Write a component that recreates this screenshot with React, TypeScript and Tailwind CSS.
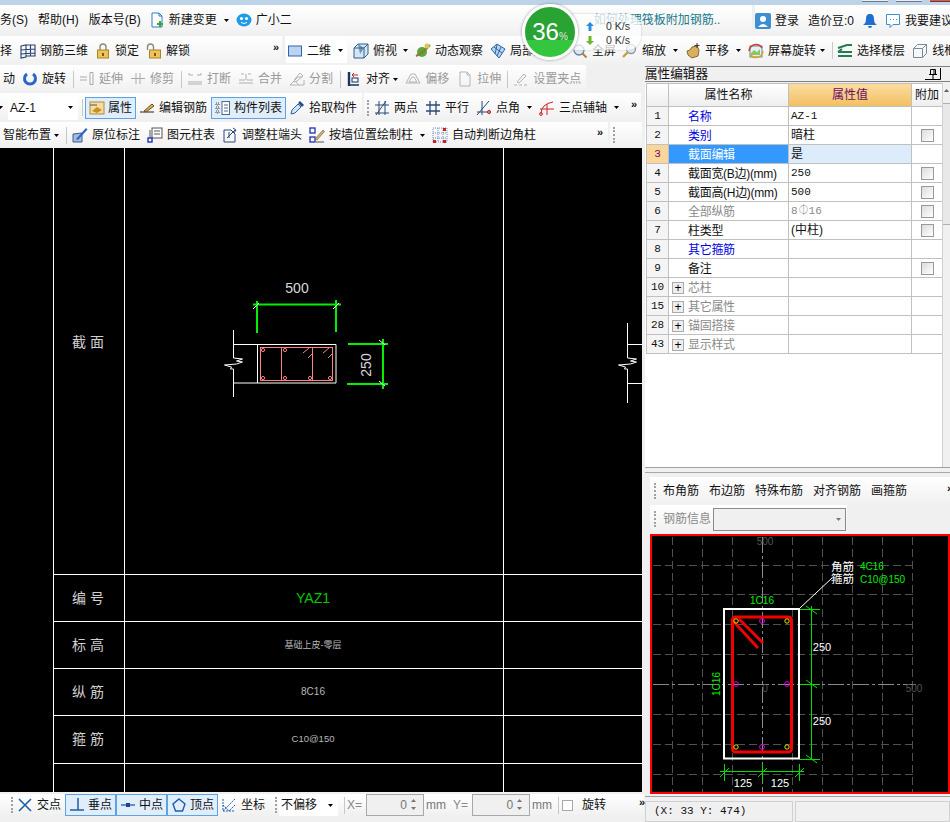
import type { ReactNode } from "react";

const Svg = ({ children, w = 16 }: { children: ReactNode; w?: number }) => (
  <svg width={w} height={16} viewBox="0 0 16 16" className="shrink-0" fill="none">
    {children}
  </svg>
);

const icons: Record<string, ReactNode> = {
  doc: (
    <>
      <path d="M3 1h7l3 3v11H3z" fill="#fff" stroke="#2c7fc9" />
      <path d="M10 1v3h3" stroke="#2c7fc9" />
      <path d="M10 9h2v2h2v2h-2v2h-2v-2H8v-2h2z" fill="#3aa63a" />
    </>
  ),
  mascot: (
    <>
      <ellipse cx="8" cy="8" rx="7.5" ry="6.5" fill="#1f9ae8" />
      <circle cx="5.5" cy="6.5" r="1.6" fill="#fff" />
      <circle cx="10.5" cy="6.5" r="1.6" fill="#fff" />
      <path d="M5 10.5q3 2 6 0" stroke="#fff" />
    </>
  ),
  grid3d: (
    <path d="M1 3l5-1v12l-5 1zM6 2h9v11H6M1 7l14-1M1 11l14-1M10.5 2v11" stroke="#28406e" strokeWidth="1.1" />
  ),
  lock: (
    <>
      <path d="M5 7V4a3 3 0 0 1 6 0v3" stroke="#8a8a7a" strokeWidth="1.4" />
      <rect x="2.5" y="7" width="11" height="8" fill="#f0c35a" stroke="#a88428" />
      <rect x="7" y="10" width="2" height="3" fill="#7a5a10" />
    </>
  ),
  unlock: (
    <>
      <path d="M1.5 7V4a3 3 0 0 1 6 0v3" stroke="#8a8a7a" strokeWidth="1.4" />
      <rect x="3.5" y="7" width="11" height="8" fill="#f0c35a" stroke="#a88428" />
      <rect x="8" y="10" width="2" height="3" fill="#7a5a10" />
    </>
  ),
  rect2d: <rect x="1.5" y="3" width="13" height="10" fill="#bcd4f2" stroke="#2f62ad" />,
  cube: (
    <>
      <path d="M1 5l4-4h10v10l-4 4H1z" fill="#d4e6f4" stroke="#2f5f8c" />
      <path d="M1 5h10v10M11 5l4-4" stroke="#2f5f8c" />
      <path d="M5 1l6 4-4 6z" fill="#3c6f9c" opacity=".7" />
    </>
  ),
  orbit: (
    <>
      <circle cx="7" cy="9" r="5" fill="#5aa83a" />
      <path d="M1 13Q8 10 15 2" stroke="#8a7a3a" strokeWidth="2" />
      <circle cx="12" cy="3" r="2.5" fill="#d8c850" />
    </>
  ),
  partial: (
    <>
      <path d="M1 6l6-5 8 5-6 9z" fill="#b8d4ee" stroke="#2f62ad" />
      <path d="M4 4l8 6M7 2l-2 9M11 4l-4 9" stroke="#2f62ad" />
    </>
  ),
  full: (
    <>
      <circle cx="7" cy="7" r="5" fill="#dce8f8" stroke="#6a80a8" strokeWidth="1.4" />
      <path d="M10.5 10.5l4 4" stroke="#a8843a" strokeWidth="2" />
    </>
  ),
  zoom: (
    <>
      <circle cx="9" cy="6" r="4.5" fill="#e4e8ee" stroke="#8a9ab0" strokeWidth="1.4" />
      <path d="M5.5 9.5L1 14" stroke="#c8a030" strokeWidth="2.4" />
    </>
  ),
  hand: (
    <>
      <path d="M2 8l3-1 2-3 5-1 2 4-1 6-6 2-4-3z" fill="#d8b060" stroke="#8a6a28" />
      <path d="M12 0v5M9.5 2.5h5" stroke="#333" />
    </>
  ),
  rotate3: (
    <>
      <rect x="2" y="3" width="12" height="11" fill="#e4f0f8" stroke="#4a90c8" />
      <path d="M3 10l3-3 3 2 3-3v6H3z" fill="#8cc860" />
      <path d="M1 8a7 7 0 0 1 13-3" stroke="#d83a20" strokeWidth="1.6" />
      <path d="M15 8a7 7 0 0 1-13 3" stroke="#e8a020" strokeWidth="1.6" />
    </>
  ),
  floors: <path d="M1 5l9-3h5M1 9h14M1 13h14M1 9l4-3" stroke="#1f7f50" strokeWidth="2" />,
  wire: <path d="M1.5 5.5l4-4h9v9l-4 4h-9zM1.5 5.5h9v9M10.5 5.5l4-4" stroke="#7a8a9a" />,
  rotate: <path d="M5 3a5.5 5.5 0 1 0 6 0" stroke="#2a66c8" strokeWidth="3" />,
  extend: <path d="M1 6h7M1 9h7M11 1.5h3v12h-3z" stroke="#aaa" />,
  trim: <path d="M1 7.5h14M6 2v11M10 2v11" stroke="#aaa" />,
  breakLine: <path d="M2 4h4M10 4h4M1 11h14M1 13h14M2 2v2M14 2v2" stroke="#b0b0b0" />,
  merge: <path d="M3 3h3M10 3h3M1 9h6M9 9h6M1 12h14M8 3v6" stroke="#b0b0b0" />,
  split: <path d="M1 14h14V9M1 14l8-8h4M5 9l5 5M11 2l3 3-6 5-3 1 1-3z" stroke="#b4b4b4" />,
  align: (
    <>
      <path d="M3 1v14" stroke="#16365f" strokeWidth="2.4" />
      <path d="M3 14h10" stroke="#16365f" strokeWidth="1.5" />
      <rect x="6" y="7" width="6" height="4" stroke="#16365f" />
      <path d="M6 4h6M6 4l2-2M6 4l2 2" stroke="#d02020" />
    </>
  ),
  offset: <path d="M1 12l5-9h4l5 9zM4 11l3-5h2l3 5z" stroke="#b4b4b4" />,
  stretch: <path d="M3 1h7l3 3v11H3zM10 1v3h3" stroke="#b4b4b4" />,
  grips: <path d="M1 14h3M6 14h3M11 14h3M4 11l7-8 2 2-7 7z" stroke="#b4b4b4" />,
  prop: (
    <>
      <rect x="1" y="2" width="14" height="12" fill="#f6dca0" stroke="#b08a40" />
      <path d="M1 5h7" stroke="#555" />
      <path d="M3 11l5-4 5 3-5 3z" fill="#c89020" />
    </>
  ),
  pencil: (
    <>
      <path d="M1 12h14" stroke="#222" />
      <path d="M5 11l8-7 2 2-8 6z" fill="#d8b060" stroke="#6a4a18" />
    </>
  ),
  list: (
    <>
      <path d="M1 3h3v2H1zM1 7h3v2H1zM1 11h3v2H1z" stroke="#444" strokeDasharray="1 1" />
      <rect x="7" y="1.5" width="7.5" height="13" fill="#fff" stroke="#4a6a8a" />
      <path d="M9 5h4M9 8h4M9 11h4" stroke="#4a6a8a" />
    </>
  ),
  dropper: (
    <>
      <path d="M2 14l1-4 6-6 3 3-6 6z" fill="#cfe4f8" stroke="#2a62a8" />
      <path d="M9 3l2-2 4 4-2 2z" fill="#234a88" />
    </>
  ),
  twoPoint: <path d="M1 13h14M1 5h14M5 1v14M12 1L2 15M11 1v14" stroke="#2a4a78" />,
  parallel: <path d="M1 5h14M1 11h14M5 1v14M11 1v14" stroke="#2a4a78" strokeWidth="1.3" />,
  pointAngle: (
    <>
      <path d="M1 12h14M6 1v14M13 1L1 15" stroke="#2a4a78" />
      <circle cx="13" cy="12" r="1.6" stroke="#d02020" />
    </>
  ),
  threePoint: (
    <>
      <path d="M2 14Q2 4 14 2M1 9h14M8 4v11" stroke="#d02020" />
      <circle cx="2" cy="14" r="1.4" stroke="#d02020" />
    </>
  ),
  mark: (
    <>
      <path d="M1 15V7l9-1v9z" fill="#a8bcd8" stroke="#3a5a98" />
      <path d="M4 12L14 1l1.5 1.5L6 13z" fill="#2a66c8" />
    </>
  ),
  table: (
    <>
      <rect x="5" y="1" width="10" height="10" fill="#fff" stroke="#555" />
      <path d="M7 4h6M7 7h6" stroke="#555" />
      <rect x="1" y="11" width="4" height="4" fill="#fff" stroke="#2030b0" strokeWidth="1.4" />
      <path d="M3 3v8" stroke="#555" />
    </>
  ),
  adjust: <path d="M2 3h7l4 4v8H2zM7 11V5M5 11l4-4 4-4M11 1l3 2-2 3" stroke="#2a4a78" />,
  wallPos: (
    <>
      <rect x="1" y="1" width="5" height="5" stroke="#2030b0" strokeWidth="1.3" />
      <rect x="1" y="10" width="5" height="5" stroke="#2030b0" strokeWidth="1.3" />
      <path d="M6 12L14 3l1.5 1.5L8 13z" fill="#d8b060" stroke="#555" strokeWidth=".6" />
      <path d="M7 15h8" stroke="#555" />
    </>
  ),
  autoGrid: (
    <>
      <path d="M1 1h14v14H1zM1 6h14M1 11h14M6 1v14M11 1v14" stroke="#6a8ab8" strokeDasharray="1 1" />
      <path d="M1 13h3v3H1zM11 13h3v3h-3zM11 1h3v3h-3z" fill="#d02020" />
    </>
  ),
  cross: <path d="M2 2l12 12M14 2L2 14" stroke="#1f5fa8" strokeWidth="1.6" />,
  perp: <path d="M1 13h14M9 1v12" stroke="#1f5fa8" strokeWidth="1.5" />,
  mid: (
    <>
      <path d="M1 8h14" stroke="#1f5fa8" strokeWidth="1.3" />
      <rect x="6" y="6" width="4" height="4" fill="#1f3f98" />
    </>
  ),
  vertex: <path d="M8 2l6 5-2.5 7h-7L2 7z" stroke="#1f5fa8" strokeWidth="1.4" />,
  coord: <path d="M2 14L14 2M2 8l6 6 6-6M2 2v12h12" stroke="#1f5fa8" strokeDasharray="2 1" />,
};

const Caret = ({ className = "" }: { className?: string }) => (
  <svg width="5" height="3" viewBox="0 0 5 3" className={`shrink-0 ${className}`}>
    <path d="M0 0h5L2.5 3z" fill="#000" />
  </svg>
);

const More = ({ className = "" }: { className?: string }) => (
  <span className={`text-[11px] font-bold leading-none -mt-[6px] ${className}`}>»</span>
);

const Sep = ({ className = "" }: { className?: string }) => (
  <span className={`w-px h-[17px] bg-[#c8c8c8] shrink-0 ${className}`} />
);

const Grip = ({ className = "" }: { className?: string }) => (
  <span className={`w-[3px] h-[16px] shrink-0 border-l-2 border-dotted border-[#a0a0a0] ${className}`} />
);

type ToolProps = { icon: string; label: string; dim?: boolean; active?: boolean; className?: string };

const Tool = ({ icon, label, dim, active, className = "" }: ToolProps) => (
  <div
    className={`flex items-center shrink-0 ${dim ? "text-[#9a9a9a]" : "text-[#111]"} ${
      active ? "gap-[3px] px-[3px] h-[22px] border border-[#5fa2e0] bg-[#e0edfa]" : "gap-[4px]"
    } ${className}`}
  >
    <Svg>{icons[icon]}</Svg>
    <span>{label}</span>
  </div>
);

const barClass = "flex items-center h-full bg-gradient-to-b from-white to-[#f0f0f0] shrink-0 overflow-hidden";

const TopRows = () => (
  <>
    <div className="h-[5px] bg-[#bcd3e8] shrink-0 flex justify-end gap-[8px]">
      <span className="w-[26px] h-[2px] bg-[#e8eef4] border-b border-[#6a7a8a]" />
      <span className="w-[26px] h-[2px] bg-[#e8eef4] border-b border-[#6a7a8a]" />
      <span className="w-[20px] h-[2px] bg-[#d85a4a] border-b border-[#6a3a3a]" />
    </div>
    <div className="flex h-[31px] shrink-0">
      <div className={`${barClass} w-[752px]`}>
        <span className="mb-[2px]">务(S)</span>
        <span className="ml-[10px] mb-[2px]">帮助(H)</span>
        <span className="ml-[10px] mb-[2px]">版本号(B)</span>
        <Tool icon="doc" label="新建变更" className="ml-[8px] mb-[2px]" />
        <Caret className="ml-[7px]" />
        <Tool icon="mascot" label="广小二" className="ml-[7px] mb-[2px]" />
        <span className="ml-[302px] mb-[2px] text-[#17788a]">如何处理筏板附加钢筋..</span>
      </div>
      <div className={`${barClass} ml-[3px] flex-1 w-0`}>
        <svg width="16" height="16" viewBox="0 0 16 16" className="shrink-0">
          <rect width="16" height="16" rx="2" fill="#3d8fd0" />
          <circle cx="8" cy="6" r="3" fill="#fff" />
          <path d="M3 14q5-6 10 0z" fill="#fff" />
        </svg>
        <span className="ml-[4px]">登录</span>
        <span className="ml-[9px]">造价豆:0</span>
        <svg width="14" height="16" viewBox="0 0 14 16" className="ml-[9px] shrink-0">
          <path d="M7 1c3 0 4 2 4 5s1 5 3 6H0c2-1 3-3 3-6s1-5 4-5z" fill="#1f6fd0" />
          <path d="M5 13a2 2 0 0 0 4 0z" fill="#1f6fd0" />
        </svg>
        <svg width="16" height="16" viewBox="0 0 16 16" className="ml-[8px] shrink-0">
          <path d="M1.5 1.5h13v10H8l-3 3v-3H1.5z" fill="#fff" stroke="#3d8fd0" />
          <path d="M5 6.5h1M8 6.5h1M11 6.5h1" stroke="#3d8fd0" />
        </svg>
        <span className="ml-[4px]">我要建议</span>
      </div>
    </div>
    <div className="flex h-[29px] shrink-0">
      <div className={`${barClass} w-[282px]`}>
        <span>择</span>
        <Tool icon="grid3d" label="钢筋三维" className="ml-[8px]" />
        <Tool icon="lock" label="锁定" className="ml-[7px]" />
        <Tool icon="unlock" label="解锁" className="ml-[7px]" />
        <More className="ml-auto mr-[3px]" />
      </div>
      <div className={`${barClass} ml-[3px] flex-1 w-0 pl-[1px]`}>
        <div className="flex items-center h-[24px] w-[61px] bg-white pl-[1px] shrink-0">
          <Tool icon="rect2d" label="二维" />
          <Caret className="ml-[7px]" />
        </div>
        <Tool icon="cube" label="俯视" className="ml-[6px]" />
        <Caret className="ml-[6px]" />
        <Tool icon="orbit" label="动态观察" className="ml-[7px]" />
        <Tool icon="partial" label="局部放大" className="ml-[7px]" />
        <Tool icon="full" label="全屏" className="ml-[14px]" />
        <Tool icon="zoom" label="缩放" className="ml-[6px]" />
        <Caret className="ml-[7px]" />
        <Tool icon="hand" label="平移" className="ml-[7px]" />
        <Caret className="ml-[7px]" />
        <Tool icon="rotate3" label="屏幕旋转" className="ml-[7px]" />
        <Caret className="ml-[4px]" />
        <Sep className="ml-[7px]" />
        <Tool icon="floors" label="选择楼层" className="ml-[4px]" />
        <Tool icon="wire" label="线框" className="ml-[7px]" />
      </div>
    </div>
  </>
);

const LeftRows = () => (
  <>
    <div className="h-[28px] shrink-0">
      <div className={`${barClass} w-[586px]`}>
        <span className="ml-[3px]">动</span>
        <Tool icon="rotate" label="旋转" className="ml-[7px]" />
        <Sep className="ml-[7px]" />
        <Tool icon="extend" label="延伸" dim className="ml-[5px]" />
        <Tool icon="trim" label="修剪" dim className="ml-[7px]" />
        <Sep className="ml-[7px]" />
        <Tool icon="breakLine" label="打断" dim className="ml-[5px]" />
        <Tool icon="merge" label="合并" dim className="ml-[7px]" />
        <Tool icon="split" label="分割" dim className="ml-[7px]" />
        <Sep className="ml-[7px]" />
        <Tool icon="align" label="对齐" className="ml-[5px]" />
        <Caret className="ml-[3px]" />
        <Tool icon="offset" label="偏移" dim className="ml-[7px]" />
        <Tool icon="stretch" label="拉伸" dim className="ml-[8px]" />
        <Sep className="ml-[6px]" />
        <Tool icon="grips" label="设置夹点" dim className="ml-[5px]" />
      </div>
    </div>
    <div className="flex h-[29px] shrink-0">
      <div className={`${barClass} w-[362px]`}>
        <Caret className="-ml-[2px]" />
        <div className="ml-[5px] flex items-center w-[70px] h-[24px] bg-white pl-[2px] shrink-0">
          <span>AZ-1</span>
          <Caret className="ml-auto mr-[5px]" />
        </div>
        <Sep className="ml-[4px]" />
        <Tool icon="prop" label="属性" active className="ml-[2px]" />
        <Tool icon="pencil" label="编辑钢筋" className="ml-[3px]" />
        <Tool icon="list" label="构件列表" active className="ml-[4px]" />
        <Tool icon="dropper" label="拾取构件" className="ml-[3px]" />
      </div>
      <div className={`${barClass} ml-[2px] w-[277px]`}>
        <Grip className="ml-[3px]" />
        <Tool icon="twoPoint" label="两点" className="ml-[4px]" />
        <Tool icon="parallel" label="平行" className="ml-[7px]" />
        <Tool icon="pointAngle" label="点角" className="ml-[7px]" />
        <Caret className="ml-[7px]" />
        <Tool icon="threePoint" label="三点辅轴" className="ml-[7px]" />
        <Caret className="ml-[7px]" />
        <More className="ml-auto mr-[4px]" />
      </div>
    </div>
    <div className="flex h-[26px] shrink-0">
      <div className={`${barClass} w-[608px]`}>
        <span className="ml-[3px]">智能布置</span>
        <Caret className="ml-[3px]" />
        <Sep className="ml-[7px]" />
        <Tool icon="mark" label="原位标注" className="ml-[5px]" />
        <Tool icon="table" label="图元柱表" className="ml-[7px]" />
        <Tool icon="adjust" label="调整柱端头" className="ml-[7px]" />
        <Tool icon="wallPos" label="按墙位置绘制柱" className="ml-[7px]" />
        <Caret className="ml-[7px]" />
        <Tool icon="autoGrid" label="自动判断边角柱" className="ml-[7px]" />
        <More className="ml-auto mr-[5px]" />
      </div>
      <div className={`${barClass} ml-[2px] w-[32px]`}>
        <Grip className="ml-[3px]" />
      </div>
    </div>
  </>
);

// the column detail sheet in the main CAD view
const MainCanvas = () => {
  const rows = [574, 621, 668, 715, 763];
  const labels = [
    { t: "编 号", y: 598 },
    { t: "标 高", y: 645 },
    { t: "纵 筋", y: 692 },
    { t: "箍 筋", y: 739 },
  ];
  const values = [
    { t: "基础上皮-零层", y: 645, s: 9 },
    { t: "8C16", y: 692, s: 10 },
    { t: "C10@150", y: 739, s: 9.5 },
  ];
  return (
    <div className="w-[642px] h-[644px] bg-black shrink-0">
      <svg width="642" height="644" viewBox="0 148 642 644" className="block">
        <path d="M53.5 148v644M124.5 148v644M503.5 148v644" stroke="#fff" />
        {rows.map((y) => (
          <path key={y} d={`M53 ${y + 0.5}H642`} stroke="#fff" />
        ))}
        <text x="88" y="347" fontSize="14" fill="#d0d0d0" textAnchor="middle">
          截 面
        </text>
        {labels.map((l) => (
          <text key={l.t} x="88" y={l.y + 5} fontSize="14" fill="#d0d0d0" textAnchor="middle">
            {l.t}
          </text>
        ))}
        <text x="313" y="603" fontSize="14" fill="#00c800" textAnchor="middle">
          YAZ1
        </text>
        {values.map((v) => (
          <text key={v.t} x="313" y={v.y + 3} fontSize={v.s} fill="#b8b8b8" textAnchor="middle">
            {v.t}
          </text>
        ))}
        <text x="297" y="293" fontSize="14" fill="#d8d8d8" textAnchor="middle">
          500
        </text>
        <path d="M253 304.5h88M257 301v32M336 300v32M348 344h40M347 384h41M383 339v50" stroke="#00f000" strokeWidth="2" />
        <path d="M253 309l6-6M333 309l6-6M379 340l6 5M379 381l6 5" stroke="#fff" />
        <path d="M233.5 330v28l9 1-6 2 6 1-6 2-12 1 7 2-1 2 3 0v28M233 344.5h103v38.5H233M257.5 344v39" stroke="#fff" fill="none" />
        <rect x="260.5" y="347.5" width="72" height="33" fill="none" stroke="#ff8080" />
        <path d="M281.5 347v33M312.5 347v33M303 353l6-5M308 358l5-5M323 353l6-5M328 358l5-5" stroke="#ff8080" />
        {[
          [263, 350],
          [263, 378],
          [285, 350],
          [285, 378],
          [310, 378],
          [330, 378],
        ].map(([x, y]) => (
          <circle key={`${x}-${y}`} cx={x} cy={y} r="1.6" fill="none" stroke="#ff8080" />
        ))}
        <text transform="translate(371 365) rotate(-90)" fontSize="14" fill="#d8d8d8" textAnchor="middle">
          250
        </text>
        <path d="M627.5 323v35l9 1-6 2 6 1-6 2-12 1 7 2-1 2 3 0v34M627 344.5h15M627 383.5h15" stroke="#fff" fill="none" />
      </svg>
    </div>
  );
};

const NumBox = ({ className = "" }: { className?: string }) => (
  <div className={`flex items-center justify-end w-[58px] h-[22px] border border-[#a8a8a8] bg-[#f0f0f0] shrink-0 relative pr-[16px] text-[#777] ${className}`}>
    0
    <div className="absolute right-[7px] top-[4px] flex flex-col gap-[5px]">
      <Caret className="rotate-180 opacity-50" />
      <Caret className="opacity-50" />
    </div>
  </div>
);

const BottomBar = () => (
  <div className="h-[30px] shrink-0 pt-[2px]">
    <div className="flex items-center h-[22px] bg-gradient-to-b from-white to-[#f0f0f0]">
      <Grip className="ml-[11px]" />
      <Tool icon="cross" label="交点" className="ml-[3px]" />
      <Tool icon="perp" label="垂点" active className="ml-[4px] w-[51px]" />
      <Tool icon="mid" label="中点" active className="w-[51px]" />
      <Tool icon="vertex" label="顶点" active className="w-[51px]" />
      <Tool icon="coord" label="坐标" className="ml-[3px]" />
      <Grip className="ml-[10px]" />
      <div className="ml-[1px] flex items-center w-[59px] h-[22px] bg-white pl-[2px] shrink-0">
        <span>不偏移</span>
        <Caret className="ml-auto mr-[5px]" />
      </div>
      <Sep className="ml-[6px]" />
      <span className="ml-[2px] text-[#888]">X=</span>
      <NumBox className="ml-[4px]" />
      <span className="ml-[2px] text-[#777]">mm</span>
      <span className="ml-[7px] text-[#888]">Y=</span>
      <NumBox className="ml-[4px]" />
      <span className="ml-[2px] text-[#777]">mm</span>
      <Sep className="ml-[6px]" />
      <span className="ml-[3px] w-[11px] h-[11px] border border-[#a8a8a8] bg-white shrink-0" />
      <span className="ml-[9px]">旋转</span>
      <More className="ml-[33px]" />
    </div>
  </div>
);

const propRows = [
  { no: "1", name: "名称", value: "AZ-1", tone: "text-[#0000e0]", mono: true },
  { no: "2", name: "类别", value: "暗柱", tone: "text-[#0000e0]", check: true },
  { no: "3", name: "截面编辑", value: "是", selected: true },
  { no: "4", name: "截面宽(B边)(mm)", value: "250", mono: true, check: true },
  { no: "5", name: "截面高(H边)(mm)", value: "500", mono: true, check: true },
  { no: "6", name: "全部纵筋", value: "8⏀16", tone: "text-[#8a8a8a]", valueTone: "text-[#8a8a8a]", mono: true, check: true },
  { no: "7", name: "柱类型", value: "(中柱)", check: true },
  { no: "8", name: "其它箍筋", value: "", tone: "text-[#0000e0]" },
  { no: "9", name: "备注", value: "", check: true },
  { no: "10", name: "芯柱", value: "", tone: "text-[#8a8a8a]", plus: true },
  { no: "15", name: "其它属性", value: "", tone: "text-[#8a8a8a]", plus: true },
  { no: "28", name: "锚固搭接", value: "", tone: "text-[#8a8a8a]", plus: true },
  { no: "43", name: "显示样式", value: "", tone: "text-[#8a8a8a]", plus: true },
];

const cell = "border-r border-b border-[#c0c0c0] flex items-center h-[19px] overflow-hidden";

const PropGrid = () => (
  <div className="ml-[1px] border-t border-l border-[#c0c0c0] w-[297px] relative">
    <div className="flex h-[23px]">
      <div className="w-[22px] border-r border-b border-[#c0c0c0] bg-gradient-to-b from-white to-[#eeeeee]" />
      <div className="w-[120px] border-r border-b border-[#c0c0c0] bg-gradient-to-b from-white to-[#eeeeee] flex items-center justify-center">
        属性名称
      </div>
      <div className="w-[123px] border-r border-b border-[#c0c0c0] bg-gradient-to-b from-[#fbdc9f] to-[#f2c060] flex items-center justify-center text-[#6a0a6a]">
        属性值
      </div>
      <div className="w-[31px] border-r border-b border-[#c0c0c0] bg-gradient-to-b from-white to-[#eeeeee] flex items-center justify-center">
        附加
      </div>
    </div>
    {propRows.map((r) => (
      <div key={r.no} className="flex">
        <div
          className={`${cell} w-[22px] justify-center font-['Liberation_Mono'] text-[11px] ${
            r.selected ? "bg-[#fbd69a] text-[#6a0a6a]" : "bg-[#f4f4f4]"
          }`}
        >
          {r.no}
        </div>
        <div className={`${cell} w-[120px] pt-[1px] ${r.selected ? "bg-[#3399ff] text-white" : r.tone ?? ""}`}>
          {r.plus ? (
            <span className="ml-[3px] mr-[4px] w-[12px] h-[12px] border border-[#aaa] bg-[#eee] flex items-center justify-center text-black text-[12px] leading-none shrink-0">
              +
            </span>
          ) : (
            <span className="w-[19px] shrink-0" />
          )}
          <span className="tracking-[-0.3px]">{r.name}</span>
        </div>
        <div className={`${cell} w-[123px] pl-[2px] ${r.selected ? "bg-[#dcecfb]" : ""} ${r.valueTone ?? ""}`}>
          <span className={r.mono ? "font-['Liberation_Mono'] text-[11px]" : ""}>{r.value}</span>
        </div>
        <div className={`${cell} w-[31px] justify-center`}>
          {r.check && <span className="w-[13px] h-[13px] border border-[#999] bg-gradient-to-br from-[#dcdcdc] to-white" />}
        </div>
      </div>
    ))}
  </div>
);

// section preview with the rebar layout
const RebarCanvas = () => {
  const hs = [565, 594, 624, 654, 714, 744, 774];
  const vs = [672, 702, 732, 792, 822, 852, 882, 912];
  return (
    <div className="h-[260px] border-2 border-[#ff0000] bg-black shrink-0 overflow-hidden">
      <svg width="296" height="256" viewBox="652 536 296 256" className="block">
        {hs.map((y) => (
          <path key={y} d={`M653 ${y}.5H916`} stroke="#505050" strokeDasharray="8 4" />
        ))}
        {vs.map((x) => (
          <path key={x} d={`M${x}.5 537V792`} stroke="#505050" strokeDasharray="8 4" />
        ))}
        <path d="M653 684.5H916M762.5 537V792" stroke="#8a8a8a" strokeDasharray="16 3 3 3" />
        <text x="765" y="545" fontSize="10" fill="#555" textAnchor="middle">
          500
        </text>
        <text x="765" y="692" fontSize="10" fill="#555" textAnchor="middle">
          0
        </text>
        <text x="914" y="692" fontSize="10" fill="#555" textAnchor="middle">
          500
        </text>
        <path d="M800 608l32-30" stroke="#fff" />
        <text x="831" y="571" fontSize="11.5" fill="#fff">
          角筋
        </text>
        <text x="831" y="583" fontSize="11.5" fill="#fff">
          箍筋
        </text>
        <text x="860" y="570" fontSize="10" fill="#00f000">
          4C16
        </text>
        <text x="860" y="583" fontSize="10" fill="#00f000">
          C10@150
        </text>
        <text x="762" y="604" fontSize="10" fill="#00f000" textAnchor="middle">
          1C16
        </text>
        <text transform="translate(720 684) rotate(-90)" fontSize="10" fill="#00f000" textAnchor="middle">
          1C16
        </text>
        <rect x="724" y="609" width="75" height="149.5" fill="none" stroke="#fff" strokeWidth="2" />
        <rect x="732.5" y="617" width="59" height="135" rx="3" fill="none" stroke="#f00000" strokeWidth="3" />
        <path d="M734 622l24 26M739 619l24 24" stroke="#f00000" strokeWidth="3" />
        {[
          [736, 621],
          [787, 621],
          [736, 747],
          [787, 747],
        ].map(([x, y]) => (
          <circle key={`y${x}${y}`} cx={x} cy={y} r="2.2" fill="none" stroke="#e8e000" />
        ))}
        {[
          [762, 621],
          [736, 684],
          [787, 684],
          [762, 747],
        ].map(([x, y]) => (
          <circle key={`m${x}${y}`} cx={x} cy={y} r="2.4" fill="none" stroke="#e000e0" />
        ))}
        <path
          d="M811.5 606v154M800 609.5h20M800 684.5h20M800 759.5h20M806 606l11 8M806 680l11 8M806 755l11 8M720 771.5h84M724.5 764v17M762.5 764v17M799.5 764v17M720 777l9-9M758 777l9-9M795 777l9-9"
          stroke="#00e000"
          fill="none"
        />
        <text x="822" y="651" fontSize="11" fill="#fff" textAnchor="middle">
          250
        </text>
        <text x="822" y="725" fontSize="11" fill="#fff" textAnchor="middle">
          250
        </text>
        <text x="743" y="787" fontSize="11" fill="#fff" textAnchor="middle">
          125
        </text>
        <text x="780" y="787" fontSize="11" fill="#fff" textAnchor="middle">
          125
        </text>
      </svg>
    </div>
  );
};

const RightPanel = () => (
  <div className="w-[306px] shrink-0 flex flex-col pl-px h-[757px]">
    <div className="mt-px h-[16px] border-t border-b border-[#808080] flex items-center shrink-0 text-[12.6px] leading-none">
      <span>属性编辑器</span>
      <svg width="16" height="12" viewBox="0 0 16 12" className="ml-auto mr-[9px] shrink-0">
        <path d="M0 11.5h15.5V0" stroke="#000" fill="none" />
        <path d="M5.5 1.5h5v5h-5zM4 6.5h8M8 6.5V11M9 2v4" stroke="#000" fill="none" />
      </svg>
    </div>
    <div className="mt-[1px] h-[385px] border-b border-[#a0a0a0] bg-white shrink-0 relative overflow-hidden">
      <PropGrid />
      <div className="absolute right-0 top-0 bottom-0 w-[8px] bg-[#f0f0f0] border-l border-[#d0d0d0]">
        <Caret className="mt-[6px] ml-[1px] rotate-180 opacity-60" />
        <div className="mt-[11px] h-[122px] bg-[#e8e8e8] border-y border-[#b0b0b0]" />
      </div>
    </div>
    <div className="h-[5px] border-b border-[#a8a8a8] shrink-0" />
    <div className="h-[4px] shrink-0" />
    <div className="h-[28px] ml-[5px] shrink-0">
      <div className={barClass}>
        <Grip className="ml-[4px]" />
        <span className="ml-[6px]">布角筋</span>
        <span className="ml-[10px]">布边筋</span>
        <span className="ml-[10px]">特殊布筋</span>
        <span className="ml-[10px]">对齐钢筋</span>
        <span className="ml-[10px]">画箍筋</span>
        <More className="ml-[40px]" />
      </div>
    </div>
    <div className="h-[28px] ml-[5px] shrink-0 flex items-center">
      <div className={`${barClass} w-[197px]`}>
        <Grip className="ml-[4px]" />
        <span className="ml-[6px] text-[#8a8a8a]">钢筋信息</span>
        <div className="ml-[2px] w-[133px] h-[23px] border border-[#8a8a8a] bg-[#f0f0f0] flex items-center shrink-0">
          <Caret className="ml-auto mr-[4px] opacity-50" />
        </div>
      </div>
    </div>
    <div className="ml-[5px] mt-[1px]">
      <RebarCanvas />
    </div>
    <div className="h-px bg-[#a0a0a0] mt-[2px] shrink-0" />
  </div>
);

const SpeedWidget = () => (
  <div className="absolute left-[522px] top-[4px] w-[120px] h-[56px]">
    <div className="absolute left-[40px] top-[10px] w-[79px] h-[36px] rounded-[14px] bg-white/75 shadow-[0_0_2px_#bbb] text-[10.5px] text-[#333]">
      <div className="flex items-center h-[18px] mt-[3px] pl-[24px]">
        <svg width="8" height="9" viewBox="0 0 8 9" className="shrink-0">
          <path d="M4 0l4 4H5.5v5h-3V4H0z" fill="#2a8ee0" />
        </svg>
        <span className="ml-auto mr-[11px]">0 K/s</span>
      </div>
      <div className="flex items-center h-[10px] pl-[24px]">
        <svg width="8" height="9" viewBox="0 0 8 9" className="shrink-0">
          <path d="M4 9L0 5h2.5V0h3v5H8z" fill="#6ab82a" />
        </svg>
        <span className="ml-auto mr-[11px]">0 K/s</span>
      </div>
    </div>
    <div className="absolute left-0 top-0 w-[56px] h-[56px] rounded-full border-[3px] border-white shadow-[0_0_3px_#888] bg-gradient-to-b from-[#2aa335] from-[66%] to-[#35c63f] to-[66%] flex items-center justify-center text-white overflow-hidden">
      <span className="text-[24px] leading-none font-['Liberation_Sans']">36</span>
      <span className="text-[10px] mt-[9px] opacity-80">%</span>
    </div>
  </div>
);

export default function App() {
  return (
    <div className="relative w-[950px] h-[822px] overflow-hidden bg-[#f0f0f0] whitespace-nowrap text-[12px] leading-none text-[#111] font-['Liberation_Sans','Noto_Sans_CJK_SC',sans-serif]">
      <TopRows />
      <div className="flex h-[757px]">
        <div className="w-[644px] shrink-0 flex flex-col">
          <LeftRows />
          <MainCanvas />
          <BottomBar />
        </div>
        <RightPanel />
      </div>
      <div className="absolute left-[645px] bottom-0 w-[305px] h-[21px] flex gap-[2px]">
        <div className="w-[148px] border border-[#d0d0d0] flex items-center pl-[8px] font-['Liberation_Mono'] text-[11px]">
          (X: 33 Y: 474)
        </div>
        <div className="flex-1 border border-[#d0d0d0]" />
      </div>
      <SpeedWidget />
    </div>
  );
}
